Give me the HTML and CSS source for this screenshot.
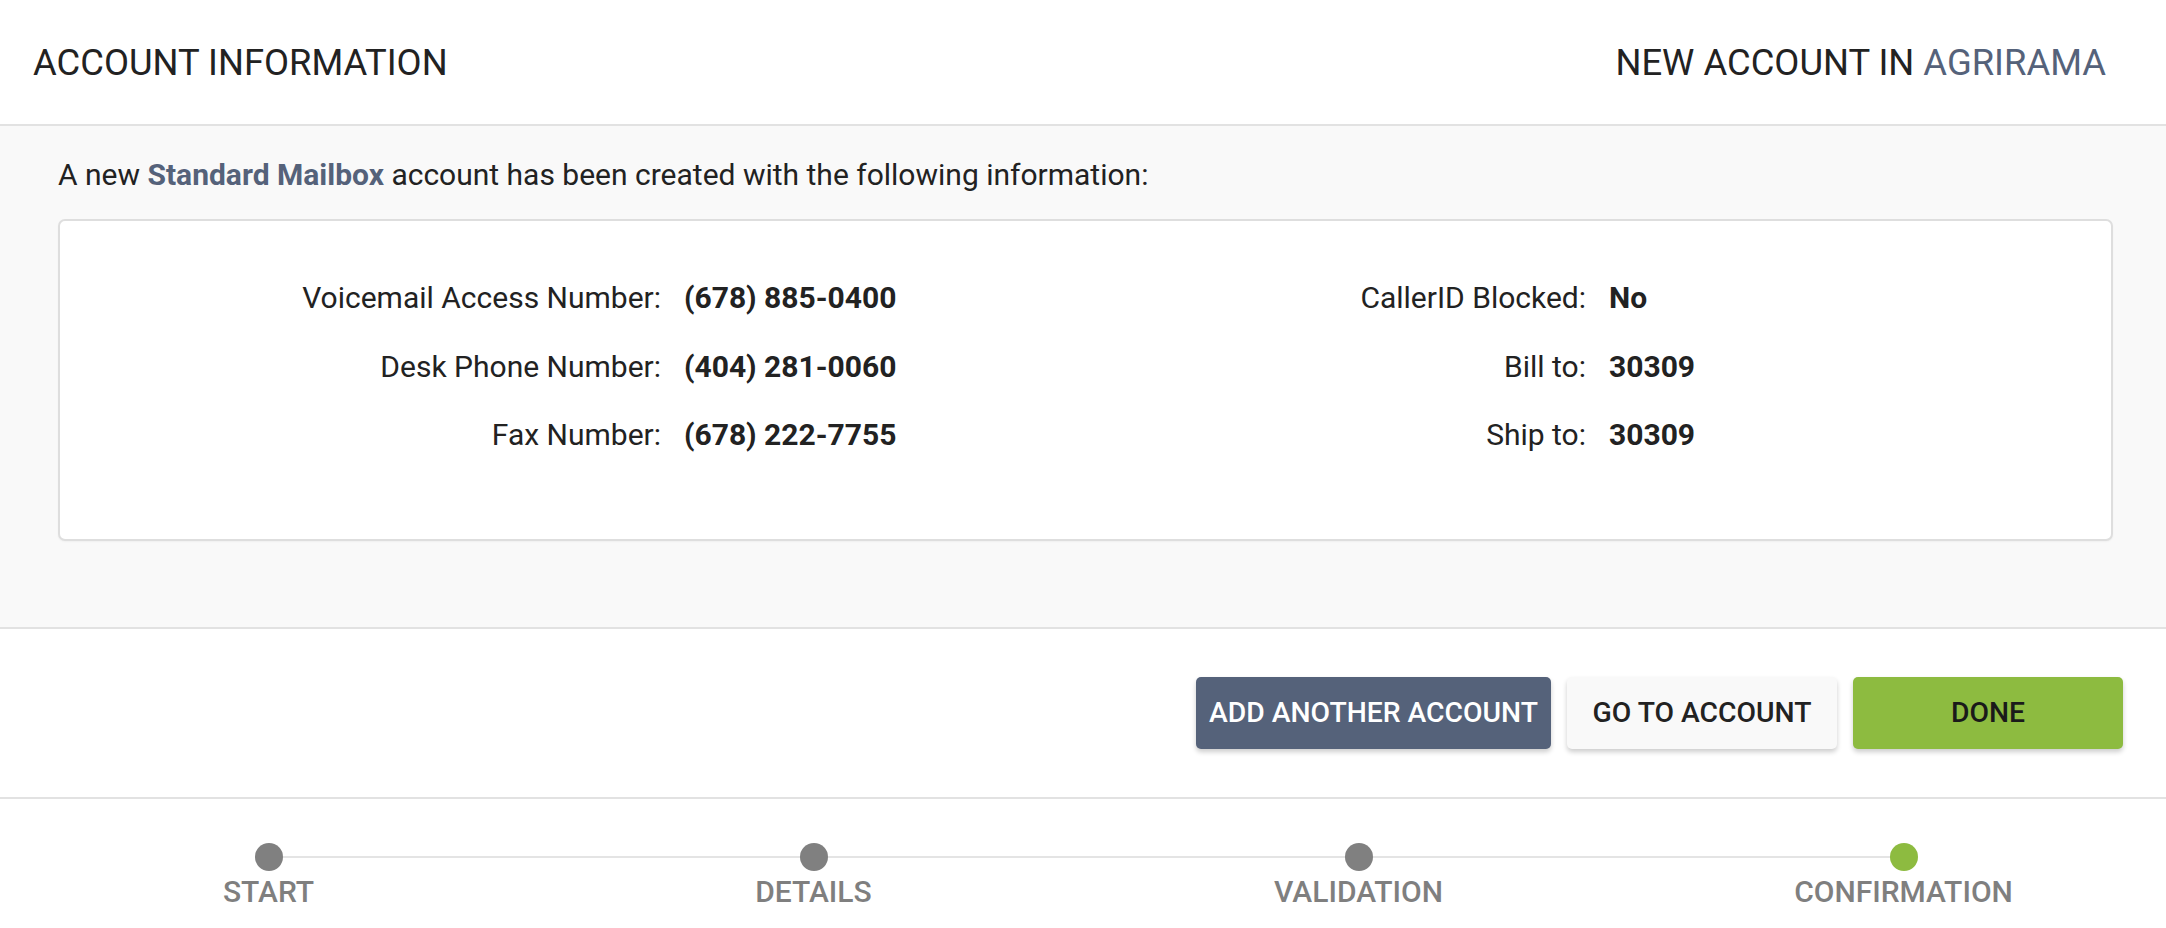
FILE: index.html
```html
<!DOCTYPE html>
<html lang="en">
<head>
    <meta charset="UTF-8">
    <meta name="viewport" content="width=device-width, initial-scale=1.0">
    <title>New Account</title>
    <link rel="stylesheet" href="styles.css">
</head>
<body>

<header class="page-header">
    <h1>Account Information</h1>
    <h2>New account in <span class="accent">Agrirama</span></h2>
</header>

<section class="summary">
    <p class="intro">A new <strong class="accent">Standard Mailbox</strong> account has been created with the following information:</p>

    <div class="info-card">
        <div class="info-row">
            <span class="label">Voicemail Access Number:</span>
            <span class="value">(678) 885-0400</span>
            <span class="label">CallerID Blocked:</span>
            <span class="value">No</span>
        </div>
        <div class="info-row">
            <span class="label">Desk Phone Number:</span>
            <span class="value">(404) 281-0060</span>
            <span class="label">Bill to:</span>
            <span class="value">30309</span>
        </div>
        <div class="info-row">
            <span class="label">Fax Number:</span>
            <span class="value">(678) 222-7755</span>
            <span class="label">Ship to:</span>
            <span class="value">30309</span>
        </div>
    </div>
</section>

<!-- Действия после создания аккаунта -->
<div class="actions">
    <button class="btn btn-primary">Add another account</button>
    <button class="btn btn-light">Go to account</button>
    <button class="btn btn-done">Done</button>
</div>

<!-- Шаги мастера -->
<ol class="stepper">
    <li class="step">Start</li>
    <li class="step">Details</li>
    <li class="step">Validation</li>
    <li class="step active">Confirmation</li>
</ol>

</body>
</html>
```

FILE: styles.css
```css
body {
    font-family: Roboto, "Liberation Sans", Arial, sans-serif;
    margin: 0;
    padding: 0;
    background-color: #fff;
    color: #222;
    overflow: hidden;
}
.accent {
    color: #55627a;
}
.page-header {
    height: 124px;
    padding: 0 60px 0 33px;
    display: flex;
    align-items: center;
    justify-content: space-between;
    border-bottom: 2px solid #e2e2e2;
}
.page-header h1,
.page-header h2 {
    margin: 0;
    font-size: 36.4px;
    font-weight: 400;
    text-transform: uppercase;
}
.summary {
    background-color: #f9f9f9;
    padding: 29px 53px 86px 58px;
    border-bottom: 2px solid #e2e2e2;
}
.intro {
    margin: 0 0 24px;
    font-size: 30px;
    line-height: 40px;
}
.intro strong {
    font-weight: 700;
}
.info-card {
    background-color: #fff;
    border: 2px solid #dedede;
    border-radius: 7px;
    padding: 55px 0 57px;
    box-shadow: 0 1px 2px rgba(0, 0, 0, 0.04);
}
.info-row {
    display: grid;
    grid-template-columns: 601px 400px 479px 1fr;
    column-gap: 23px;
    font-size: 30px;
    line-height: 44px;
    margin-bottom: 24.5px;
}
.info-row .label {
    text-align: right;
}
.info-row .value {
    font-weight: 700;
}
.actions {
    display: flex;
    justify-content: flex-end;
    gap: 16px;
    padding: 48px 43px;
    border-bottom: 2px solid #e2e2e2;
}
.btn {
    height: 72px;
    min-width: 270px;
    padding: 0 13px;
    border: none;
    border-radius: 5px;
    font-family: inherit;
    font-size: 28.3px;
    font-weight: 500;
    text-transform: uppercase;
    cursor: pointer;
    box-shadow: 0 3px 5px rgba(0, 0, 0, 0.2);
}
.btn-primary {
    background-color: #55627a;
    color: #fff;
}
.btn-light {
    background-color: #f9f9f9;
    color: #222;
}
.btn-done {
    background-color: #8dbb40;
    color: #1a1a1a;
}
.stepper {
    list-style: none;
    margin: 0 0 0 -4px;
    padding: 44px 0 0;
    display: grid;
    grid-template-columns: repeat(4, 545px);
}
.step {
    position: relative;
    display: flex;
    flex-direction: column;
    align-items: center;
    font-size: 30px;
    font-weight: 500;
    line-height: 32px;
    color: #7f7f7f;
    text-transform: uppercase;
}
.step::before {
    content: "";
    width: 28px;
    height: 28px;
    border-radius: 50%;
    background-color: #808080;
    margin-bottom: 5px;
    position: relative;
    z-index: 1;
}
.step.active::before {
    background-color: #8dbb40;
}
/* линия до следующего шага */
.step:not(:last-child)::after {
    content: "";
    position: absolute;
    top: 13px;
    left: 50%;
    width: 100%;
    height: 2px;
    background-color: #e4e4e4;
}
```
